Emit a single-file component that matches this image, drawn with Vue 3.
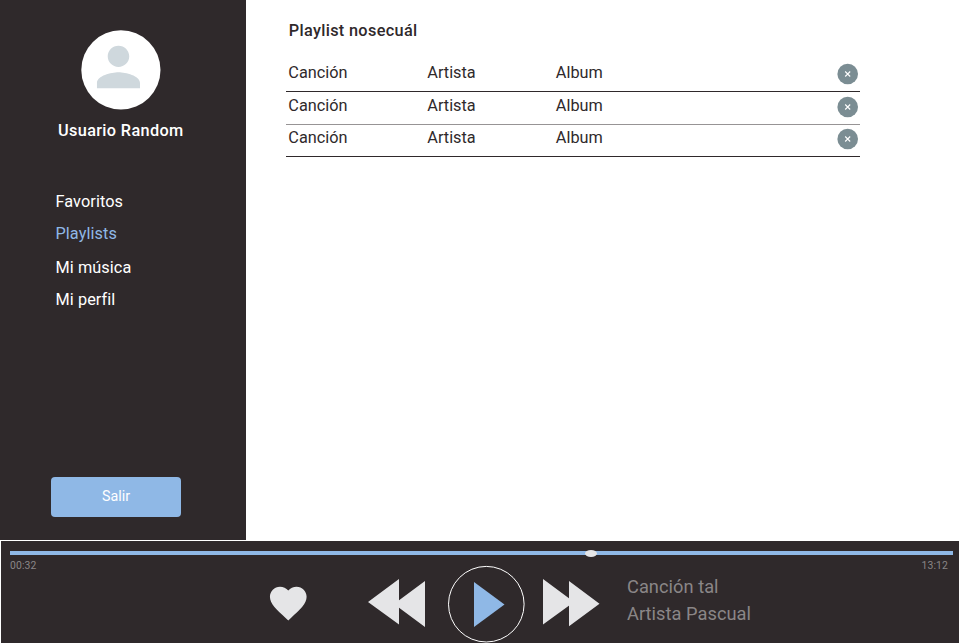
<script setup>
import { ref } from 'vue'

const menu = ['Favoritos', 'Playlists', 'Mi música', 'Mi perfil']
const active = ref('Playlists')
const songs = ref([
  { id: 1, title: 'Canción', artist: 'Artista', album: 'Album' },
  { id: 2, title: 'Canción', artist: 'Artista', album: 'Album' },
  { id: 3, title: 'Canción', artist: 'Artista', album: 'Album' },
])
const progress = 61.6

function remove(id) {
  songs.value = songs.value.filter((song) => song.id !== id)
}
</script>

<template>
  <div class="app">
    <div class="body">
      <aside class="sidebar">
        <svg class="avatar" viewBox="0 0 80 80">
          <circle cx="39.9" cy="39.9" r="39.6" />
          <path transform="translate(5.2 5) scale(2.69 2.66)" d="M12 12c2.21 0 4-1.79 4-4s-1.79-4-4-4-4 1.79-4 4 1.79 4 4 4zm0 2c-2.67 0-8 1.34-8 4v2h16v-2c0-2.66-5.33-4-8-4z" />
        </svg>
        <div class="user">Usuario Random</div>
        <nav class="menu">
          <a v-for="item in menu" :key="item" class="link" :class="{ active: item === active }" @click="active = item">{{ item }}</a>
        </nav>
        <button class="logout">Salir</button>
      </aside>

      <main class="content">
        <h1 class="title">Playlist nosecuál</h1>
        <div class="songs">
          <div v-for="song in songs" :key="song.id" class="song">
            <span>{{ song.title }}</span>
            <span>{{ song.artist }}</span>
            <span>{{ song.album }}</span>
            <button class="remove" @click="remove(song.id)">
              <svg viewBox="0 0 22 22">
                <circle cx="10.7" cy="11" r="10.3" />
                <path d="M8.2 8.5l5 5M13.2 8.5l-5 5" />
              </svg>
            </button>
          </div>
        </div>
      </main>
    </div>

    <footer class="player">
      <div class="track"><span class="thumb" :style="{ left: progress + '%' }"></span></div>
      <div class="times"><span>00:32</span><span>13:12</span></div>
      <div class="controls">
        <svg class="heart" viewBox="0 0 24 24">
          <path d="M12 21.35l-1.45-1.32C5.4 15.36 2 12.28 2 8.5 2 5.42 4.42 3 7.5 3c1.74 0 3.41.81 4.5 2.09C13.09 3.81 14.76 3 16.5 3 19.58 3 22 5.42 22 8.5c0 3.78-3.4 6.86-8.55 11.54L12 21.35z" />
        </svg>
        <svg class="skip back" viewBox="0 0 58 50">
          <path d="M0 24L31 1v45.5zM26 26L57 3v46z" />
        </svg>
        <svg class="play" viewBox="0 0 78 78">
          <circle cx="39.3" cy="39.2" r="37.8" />
          <path d="M27 17l30.5 22.5L27 62z" />
        </svg>
        <svg class="skip" viewBox="0 0 58 50">
          <path d="M0 1l31 23L0 46.5zM26 3l30.5 22.7L26 48.3z" />
        </svg>
        <div class="now"><div>Canción tal</div><div>Artista Pascual</div></div>
      </div>
    </footer>
  </div>
</template>

<style>
body {
  margin: 0;
  overflow: hidden;
  background: #fff;
}
</style>

<style scoped>
.app {
  width: 959px;
  height: 643px;
  overflow: hidden;
  box-sizing: border-box;
  font: 16.3px/20px Roboto, sans-serif;
  color: #2f292b;
}
button {
  padding: 0;
  border: 0;
  font-family: inherit;
}
svg {
  display: block;
  flex: none;
}
.body {
  display: flex;
  height: 540px;
}
.sidebar {
  display: flex;
  flex-direction: column;
  box-sizing: border-box;
  width: 246px;
  padding: 30px 0 23px;
  background: #2f292b;
  color: #fff;
}
.avatar {
  width: 80px;
  height: 80px;
  margin-left: 81px;
}
.avatar circle {
  fill: #fff;
}
.avatar path {
  fill: #cfd8dd;
}
.user {
  margin: 11px 0 0 58px;
  font-weight: 500;
  letter-spacing: 0.35px;
}
.menu {
  display: flex;
  flex-direction: column;
  gap: 12px;
  margin: 51px 0 0 55.5px;
  letter-spacing: 0.07px;
}
.link:nth-child(3) {
  margin-top: 2px;
}
.active {
  color: #8fb8e6;
}
.logout {
  width: 130px;
  height: 40px;
  margin: auto 0 0 51px;
  padding-bottom: 2px;
  border-radius: 4px;
  background: #8fb8e6;
  color: #fff;
  font-size: 14.3px;
}
.content {
  padding: 21px 0 0 40px;
}
.title {
  margin: 0 0 0 2.7px;
  font-size: 16.3px;
  font-weight: 500;
  line-height: 20px;
  letter-spacing: 0.33px;
}
.songs {
  width: 574px;
  margin-top: 19px;
}
.song {
  display: grid;
  grid-template-columns: 139px 128.5px 1fr 22px;
  align-items: start;
  box-sizing: border-box;
  height: 32px;
  padding: 3px 1.3px 0 2.3px;
  border-bottom: 1px solid #2f292b;
}
.song:nth-child(2) {
  height: 33px;
  padding-top: 4px;
  border-color: #979495;
}
.remove {
  width: 22px;
  height: 22px;
  background: none;
}
.song:nth-child(2) .remove {
  margin-top: -0.5px;
}
.remove circle {
  fill: #7b8d93;
}
.remove path {
  fill: none;
  stroke: #fff;
  stroke-width: 1.1;
}
.player {
  box-sizing: border-box;
  height: 103px;
  padding: 10px 6px 0 9px;
  border: solid #fff;
  border-width: 1px 0 0 1px;
  background: #2f292b;
}
.track {
  position: relative;
  height: 4px;
  background: #8fb8e6;
}
.thumb {
  position: absolute;
  top: -1.5px;
  width: 12px;
  height: 7px;
  margin-left: -6px;
  border-radius: 50%;
  background: #e5e5e7;
}
.times {
  display: flex;
  justify-content: space-between;
  box-sizing: border-box;
  height: 10px;
  padding: 1px 5px 0 0;
  font-size: 10.4px;
  letter-spacing: 0.1px;
  color: #8a8687;
}
.controls {
  display: flex;
  align-items: flex-start;
  padding-left: 256px;
}
.heart {
  width: 44px;
  height: 44px;
  margin: 16px 58px 0 0;
  overflow: visible;
  fill: #e5e5e7;
}
.heart path {
  transform: translate(0.15px, 0.15px);
}
.skip {
  width: 58px;
  height: 50px;
  margin-top: 13px;
  fill: #e5e5e7;
}
.play {
  width: 78px;
  height: 78px;
  margin: 0 18px 0 21px;
}
.play circle {
  fill: none;
  stroke: #fff;
}
.play path {
  fill: #8fb8e6;
}
.now {
  margin: 8px 0 0 26px;
  font-size: 18.25px;
  line-height: 27px;
  letter-spacing: 0.03px;
  color: #8a8687;
}
</style>
